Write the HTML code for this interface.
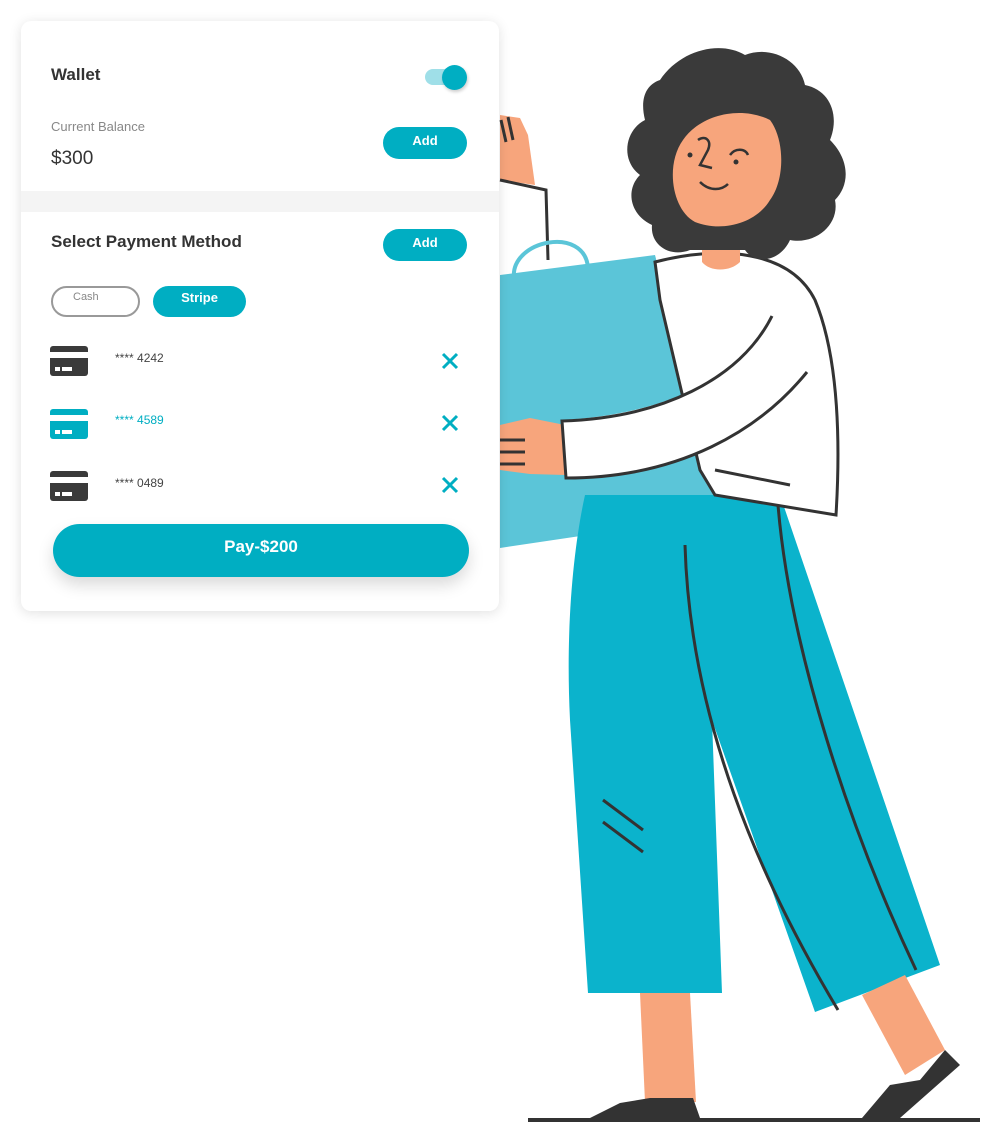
<!DOCTYPE html>
<html><head><meta charset="utf-8"><style>
*{margin:0;padding:0;box-sizing:border-box}
body{width:981px;height:1123px;background:#fff;position:relative;overflow:hidden;font-family:"Liberation Sans",sans-serif}
svg.ill{position:absolute;left:0;top:0}
.card{position:absolute;left:21px;top:21px;width:478px;height:590px;background:#fff;border-radius:10px;box-shadow:0 2px 12px rgba(0,0,0,.12);overflow:hidden}
.a{position:absolute}
.t{font-weight:bold;color:#333;font-size:17px}
.btn{position:absolute;background:#00aec2;color:#fff;font-weight:bold;font-size:13px;border-radius:16px;text-align:center}
.num{position:absolute;font-size:12px;color:#444}
.x{position:absolute;width:18px;height:18px}
</style></head><body>
<svg class="ill" width="981" height="1123" viewBox="0 0 981 1123">
<!-- raised hand -->
<path d="M500 115 L520 118 L528 135 L535 185 L500 180 Z" fill="#f7a57c"/>
<path d="M501 120 L506 142 M508 117 L513 140" stroke="#333" stroke-width="3"/>
<path d="M500 180 L546 190 L548 260" stroke="#333" stroke-width="3" fill="none"/>
<!-- bag -->
<path d="M500 275 L655 255 L722 515 L500 548 Z" fill="#5bc5d8"/>
<path d="M514 278 C510 240 585 225 588 268" stroke="#5bc5d8" stroke-width="4" fill="none"/>
<!-- pants -->
<path d="M585 495 L780 495 L940 965 L815 1012 L712 720 L722 993 L588 993 L570 720 C565 620 575 540 585 495 Z" fill="#0bb3cc"/>
<path d="M685 545 C690 720 760 880 838 1010" stroke="#333" stroke-width="3" fill="none"/>
<path d="M778 505 C790 650 850 830 916 970" stroke="#333" stroke-width="3" fill="none"/>
<path d="M603 800 L643 830 M603 822 L643 852" stroke="#333" stroke-width="3"/>
<!-- legs -->
<path d="M640 993 L690 993 L696 1102 L645 1102 Z" fill="#f7a57c"/>
<path d="M862 995 L905 975 L945 1050 L905 1075 Z" fill="#f7a57c"/>
<path d="M590 1118 L620 1103 L650 1098 L693 1098 L700 1118 Z" fill="#333"/>
<path d="M862 1118 L890 1085 L920 1080 L945 1050 L960 1065 L900 1118 Z" fill="#333"/>
<line x1="528" y1="1120" x2="980" y2="1120" stroke="#333" stroke-width="4"/>
<!-- shirt -->
<path d="M655 262 C720 245 790 250 815 300 C840 360 840 450 836 515 L715 495 L700 470 L660 300 Z" fill="#fff" stroke="#333" stroke-width="3"/>
<path d="M715 470 L790 485" stroke="#333" stroke-width="3"/>
<!-- hand -->
<path d="M500 425 L530 418 L565 425 L565 475 L530 474 L500 470 Z" fill="#f7a57c"/>
<path d="M500 440 L525 440 M500 452 L525 452 M500 464 L525 464" stroke="#333" stroke-width="3"/>
<!-- arm -->
<path d="M562 420 C660 415 740 380 772 318 L805 372 C760 430 680 478 566 478 Z" fill="#fff"/>
<path d="M772 316 C740 380 660 418 562 421 L566 478 C680 478 760 430 807 372" stroke="#333" stroke-width="3" fill="none"/>
<!-- neck -->
<path d="M702 215 L740 215 L740 262 C730 272 710 272 702 262 Z" fill="#f7a57c"/>
<!-- hair -->
<path d="M660 80 C680 50 720 40 745 55 C770 45 800 60 805 85 C830 90 840 115 830 140 C850 160 850 185 835 200 C840 225 815 245 790 240 C780 262 755 265 745 250 L690 250 C670 258 650 245 652 225 C630 215 625 190 640 175 C620 160 625 130 645 120 C640 100 645 85 660 80 Z" fill="#3a3a3a"/>
<!-- face -->
<path d="M683 140 C700 115 740 105 770 120 C785 140 785 180 770 200 C755 225 720 232 695 222 C672 210 665 165 683 140 Z" fill="#f7a57c"/>
<path d="M698 140 C705 135 712 140 708 150 L700 165 L712 168" stroke="#333" stroke-width="2.5" fill="none"/>
<path d="M730 155 C735 148 745 148 748 155" stroke="#333" stroke-width="2.5" fill="none"/>
<circle cx="690" cy="155" r="2.5" fill="#333"/><circle cx="736" cy="162" r="2.5" fill="#333"/>
<path d="M700 182 C710 192 722 190 728 184" stroke="#333" stroke-width="2.5" fill="none"/>
</svg>
<div class="card">
 <div class="a t" style="left:30px;top:44px">Wallet</div>
 <div class="a" style="left:404px;top:48px;width:40px;height:16px;border-radius:8px;background:#9fdfe8"></div>
 <div class="a" style="left:421px;top:44px;width:25px;height:25px;border-radius:50%;background:#00aec2;box-shadow:1px 2px 3px rgba(0,0,0,.2)"></div>
 <div class="a" style="left:30px;top:98px;font-size:13px;color:#888">Current Balance</div>
 <div class="a" style="left:30px;top:127px;font-size:19px;color:#333">$300</div>
 <div class="btn" style="left:362px;top:106px;width:84px;height:32px;line-height:28px">Add</div>
 <div class="a" style="left:0;top:170px;width:478px;height:21px;background:#f4f4f4"></div>
 <div class="a t" style="left:30px;top:211px">Select Payment Method</div>
 <div class="btn" style="left:362px;top:208px;width:84px;height:32px;line-height:28px">Add</div>
 <div class="a" style="left:30px;top:265px;width:89px;height:31px;border:2px solid #999;border-radius:16px;font-size:11px;color:#888;padding:3px 0 0 20px">Cash</div>
 <div class="btn" style="left:132px;top:265px;width:93px;height:31px;line-height:24px">Stripe</div>
 <!-- cards -->
 <svg class="a" style="left:29px;top:325px" width="38" height="30"><rect y="0" width="38" height="30" rx="3" fill="#3a3a3a"/><rect y="6" width="38" height="6" fill="#fff"/><rect x="5" y="21" width="5" height="4" fill="#fff"/><rect x="12" y="21" width="10" height="4" fill="#fff"/></svg>
 <svg class="a" style="left:29px;top:388px" width="38" height="30"><rect width="38" height="30" rx="3" fill="#00aec2"/><rect y="6" width="38" height="6" fill="#fff"/><rect x="5" y="21" width="5" height="4" fill="#fff"/><rect x="12" y="21" width="10" height="4" fill="#fff"/></svg>
 <svg class="a" style="left:29px;top:450px" width="38" height="30"><rect width="38" height="30" rx="3" fill="#3a3a3a"/><rect y="6" width="38" height="6" fill="#fff"/><rect x="5" y="21" width="5" height="4" fill="#fff"/><rect x="12" y="21" width="10" height="4" fill="#fff"/></svg>
 <div class="num" style="left:94px;top:330px">**** 4242</div>
 <div class="num" style="left:94px;top:392px;color:#00aec2">**** 4589</div>
 <div class="num" style="left:94px;top:455px">**** 0489</div>
 <svg class="x" style="left:420px;top:331px"><path d="M2 2L16 16M16 2L2 16" stroke="#00aec2" stroke-width="3"/></svg>
 <svg class="x" style="left:420px;top:393px"><path d="M2 2L16 16M16 2L2 16" stroke="#00aec2" stroke-width="3"/></svg>
 <svg class="x" style="left:420px;top:455px"><path d="M2 2L16 16M16 2L2 16" stroke="#00aec2" stroke-width="3"/></svg>
 <div class="btn" style="left:32px;top:503px;width:416px;height:53px;line-height:46px;border-radius:27px;font-size:17px;font-weight:bold;box-shadow:0 8px 16px rgba(0,0,0,.15)">Pay-$200</div>
</div>
</body></html>
